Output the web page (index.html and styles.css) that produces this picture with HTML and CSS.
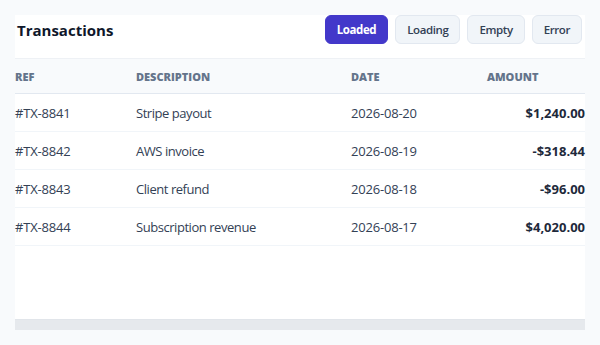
FILE: index.html
```html
<!DOCTYPE html>
<html>
<head>
<meta charset="utf-8">
<link rel="stylesheet" href="styles.css">
</head>
<body>
<div class="card">
  <div class="head">
    <h2 class="title">Transactions</h2>
    <div class="tabs">
      <button class="tab active">Loaded</button>
      <button class="tab">Loading</button>
      <button class="tab">Empty</button>
      <button class="tab">Error</button>
    </div>
  </div>
  <div class="body">
    <table class="tbl">
      <colgroup>
        <col class="c1"><col class="c2"><col class="c3"><col class="c4">
      </colgroup>
      <thead>
        <tr><th>Ref</th><th>Description</th><th>Date</th><th>Amount</th></tr>
      </thead>
      <tbody>
        <tr><td>#TX-8841</td><td class="desc">Stripe payout</td><td>2026-08-20</td><td class="amt">$1,240.00</td></tr>
        <tr><td>#TX-8842</td><td class="desc">AWS invoice</td><td>2026-08-19</td><td class="amt">-$318.44</td></tr>
        <tr><td>#TX-8843</td><td class="desc">Client refund</td><td>2026-08-18</td><td class="amt">-$96.00</td></tr>
        <tr><td>#TX-8844</td><td class="desc">Subscription revenue</td><td>2026-08-17</td><td class="amt">$4,020.00</td></tr>
      </tbody>
    </table>
  </div>
  <div class="track"></div>
</div>
</body>
</html>
```
FILE: styles.css
```css
* { box-sizing: border-box; }
html, body { margin: 0; }
body {
  background: #f8fafc;
  padding: 15px;
  font-family: "Open Sans", "Noto Sans", sans-serif;
  color: #334155;
}
.card {
  background: #fff;
  width: 570px;
  height: 315px;
  display: flex;
  flex-direction: column;
}
.head {
  display: flex;
  align-items: center;
  justify-content: space-between;
  height: 43px;
  padding: 0 3px 14px 2px;
}
.title {
  margin: 0;
  font-size: 15px;
  font-weight: 700;
  color: #0f172a;
}
.tabs { display: flex; gap: 7px; }
.tab {
  font-family: inherit;
  font-size: 11.5px;
  font-weight: 600;
  letter-spacing: -0.4px;
  height: 29px;
  padding: 0 11px;
  border-radius: 6px;
  border: 1px solid #e2e8f0;
  background: #f1f5f9;
  color: #334155;
}
.tab.active {
  background: #4338ca;
  border-color: #4338ca;
  color: #fff;
  font-weight: 700;
}
.body { flex: 1; }
.tbl {
  width: 100%;
  border-collapse: collapse;
  table-layout: fixed;
}
.c1 { width: 121px; }
.c2 { width: 215px; }
.c3 { width: 136px; }
.c4 { width: 98px; }
.tbl th {
  text-align: left;
  font-size: 11px;
  font-weight: 800;
  text-transform: uppercase;
  color: #64748b;
  background: #f8fafc;
  height: 35px;
  padding: 0;
  border-top: 1px solid #eef1f5;
  border-bottom: 1px solid #e2e8f0;
}
.tbl td {
  font-size: 13px;
  letter-spacing: -0.2px;
  height: 38px;
  padding: 0;
  border-bottom: 1px solid #f1f5f9;
}
.tbl td.desc { letter-spacing: -0.45px; }
.tbl td.amt {
  text-align: right;
  font-weight: 700;
  letter-spacing: 0;
  color: #1e293b;
}
.track {
  height: 11px;
  background: #e6e9ed;
  border-top: 1px solid #e1e5ea;
}
```
